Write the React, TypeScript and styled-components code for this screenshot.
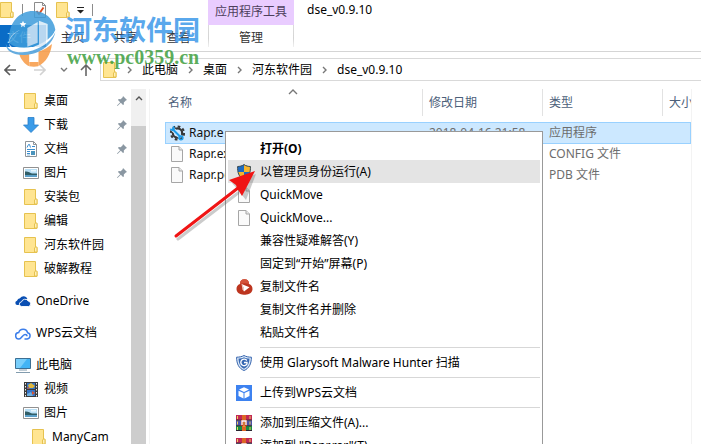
import React from 'react';
import styled, { createGlobalStyle, css } from 'styled-components';

const GlobalStyle = createGlobalStyle`
  * { box-sizing: border-box; }
  html, body { margin: 0; height: 100%; overflow: hidden; }
  body, button {
    font-family: "Noto Sans", "Noto Sans CJK SC", sans-serif;
    font-size: 12px;
    line-height: 16px;
    color: #000;
  }
  button { border: 0; padding: 0; background: none; text-align: left; }
  a { color: inherit; text-decoration: none; }
  svg { display: block; flex: none; }
`;

const Window = styled.div`
  position: relative;
  height: 100vh;
  overflow: hidden;
  display: flex;
  flex-direction: column;
  background: #fff;
`;

const TitleBar = styled.header`
  display: flex;
  height: 25px;
  flex: none;
`;

const QuickAccess = styled.div`
  display: flex;
  width: 208px;
  height: 20px;
  align-items: center;
`;

const QuickButton = styled.button<{ $gap?: number }>`
  display: flex;
  margin-left: ${(p) => p.$gap ?? 0}px;
`;

const QuickDivider = styled.span<{ $gap: number }>`
  width: 1px;
  height: 12px;
  margin-left: ${(p) => p.$gap}px;
  background: #8c8c8c;
`;

const ToolGroup = styled.div`
  width: 86px;
  padding-top: 4px;
  background: #e9ccff;
  color: #4d3f5c;
  text-align: center;
`;

const Title = styled.h1`
  margin: 2px 0 0 13px;
  font-size: 12px;
  line-height: 16px;
  font-weight: 400;
`;

const Ribbon = styled.nav`
  display: flex;
  flex: none;
  height: 27px;
  border-bottom: 1px solid #d5d5d5;
  padding-bottom: 4px;
`;

const RibbonTab = styled.button<{ $kind?: 'file' | 'tool' }>`
  width: 53px;
  padding-top: 3px;
  text-align: center;
  color: #333;
  ${(p) => p.$kind === 'file' && css`
    width: 46px;
    background: #0a6cc6;
    color: #cfe6fa;
    padding-right: 8px;
  `}
  ${(p) => p.$kind === 'tool' && css`
    width: 86px;
    margin-left: 3px;
    border: solid;
    border-width: 0 1px;
    border-image: linear-gradient(#dcdcdc, #d4d4d4 60%, #f4f4f4) 1;
  `}
`;

const AddressRow = styled.div`
  display: flex;
  flex: none;
  align-items: center;
  height: 36px;
  padding: 0 0 1px 4px;
`;

const HistoryButtons = styled.div`
  display: flex;
  align-items: center;
  width: 96px;
`;

const HistoryButton = styled.button<{ $gap?: number }>`
  margin-left: ${(p) => p.$gap ?? 0}px;
`;

const AddressBox = styled.div`
  display: flex;
  flex: 1;
  align-items: center;
  height: 23px;
  padding-left: 2px;
  border: 1px solid #d9d9d9;
  border-right: 0;
`;

const Crumb = styled.a`
  padding-left: 10px;
`;

const CrumbArrow = styled.span`
  padding-left: 10px;
`;

const Body = styled.div`
  display: flex;
  flex: 1;
  min-height: 0;
`;

const Sidebar = styled.nav`
  width: 131px;
  padding-top: 1px;
  overflow: hidden;
`;

const NavItem = styled.a<{ $level?: number; $gap?: boolean }>`
  display: flex;
  align-items: center;
  height: 24px;
  margin-top: ${(p) => (p.$gap ? 8 : 0)}px;
  padding: 0 4px 0 ${(p) => 15 + (p.$level ?? 0) * 8}px;
  white-space: nowrap;
`;

const NavIcon = styled.span`
  display: flex;
  justify-content: center;
  width: 16px;
  flex: none;
`;

const NavLabel = styled.span`
  flex: 1;
  padding-left: 5px;
`;

const ScrollTrack = styled.div`
  width: 15px;
  flex: none;
  margin-top: 1px;
  background: #f0f0f0;
`;

const ScrollUp = styled.button`
  display: flex;
  width: 15px;
  height: 37px;
  padding: 6px 0 0 4px;
`;

const ScrollThumb = styled.div`
  height: 100%;
  background: #cdcdcd;
`;

const FilePane = styled.main`
  flex: 1;
  min-width: 0;
  margin: 1px 9px 0 3px;
  padding-left: 15px;
  border: solid #f3f3f3;
  border-width: 0 1px;
  overflow: hidden;
`;

const FileTable = styled.table`
  width: 100%;
  table-layout: fixed;
  border-collapse: collapse;
`;

const HeadCell = styled.th<{ $width?: number }>`
  width: ${(p) => (p.$width ? `${p.$width}px` : 'auto')};
  height: 33px;
  padding: 0 0 6px;
  font-weight: 400;
  overflow: hidden;
  white-space: nowrap;
`;

const SortButton = styled.button<{ $first?: boolean; $last?: boolean }>`
  position: relative;
  width: 100%;
  height: 27px;
  padding-left: ${(p) => (p.$first ? 3 : 6)}px;
  border-right: ${(p) => (p.$last ? 0 : 1)}px solid #e2e2e2;
  color: #4c607a;
  overflow: hidden;
`;

const SortMark = styled.span`
  position: absolute;
  top: 0;
  left: 50%;
  margin-left: -6px;
`;

const FileCell = styled.td`
  padding: 0 0 0 6px;
  color: #6d6d6d;
  white-space: nowrap;
  overflow: hidden;
`;

const FileRow = styled.tr<{ $selected?: boolean }>`
  height: 21px;
  ${FileCell} { padding-bottom: ${(p) => (p.$selected ? 0 : 2)}px; }
  ${(p) => p.$selected && css`
    height: 22px;
    background: #cce8ff;
    box-shadow: inset 0 0 0 1px #99d1ff;
  `}
`;

const NameCell = styled(FileCell)`
  padding-left: 4px;
  color: #111;
`;

const FileName = styled.span`
  display: flex;
  align-items: center;
  gap: 4px;
`;

const FileIcon = styled.span`
  display: flex;
  justify-content: center;
  width: 16px;
`;

const Menu = styled.div`
  position: absolute;
  left: 225px;
  top: 131px;
  width: 318px;
  padding: 5px 2px;
  border: 1px solid #999;
  background: #fff;
`;

const MenuItem = styled.button<{ $active?: boolean; $bold?: boolean }>`
  display: flex;
  align-items: center;
  width: 100%;
  height: 23px;
  padding-left: 8px;
  background: ${(p) => (p.$active ? '#e4e4e4' : 'transparent')};
  font-weight: ${(p) => (p.$bold ? 700 : 400)};
  white-space: nowrap;
`;

const MenuIcon = styled.span`
  display: flex;
  justify-content: center;
  width: 16px;
  margin-right: 8px;
`;

const MenuDivider = styled.hr`
  height: 1px;
  margin: 3px 0 3px 32px;
  border: 0;
  background: #d7d7d7;
`;

const Pointer = styled.svg`
  position: absolute;
  left: 170px;
  top: 165px;
  pointer-events: none;
`;

const Watermark = styled.div`
  position: absolute;
  left: 4px;
  top: 8px;
  display: flex;
  pointer-events: none;
`;

const WatermarkText = styled.div`
  padding: 5px 0 0 1px;
  white-space: nowrap;
`;

const WatermarkName = styled.div`
  font-family: "Noto Sans CJK SC", sans-serif;
  font-weight: 700;
  font-size: 27px;
  line-height: 32px;
  color: rgba(52, 148, 232, 0.82);
`;

const WatermarkSite = styled.div`
  padding: 2px 0 0 2px;
  font-family: "Liberation Serif", serif;
  font-weight: 700;
  font-size: 20px;
  line-height: 20px;
  color: rgba(62, 158, 62, 0.85);
`;

const Folder = () => (
  <svg width="14" height="16" viewBox="0 0 14 16">
    <path d="M.5.5h11v10h1.500v5H.5z" fill="#ffe592" stroke="#e6c24f" />
    <path d="M10.500 15V11l1-1h1.500v5z" fill="#fff0b8" stroke="#e6c24f" />
  </svg>
);

const Page = () => (
  <svg width="12" height="16" viewBox="0 0 12 16">
    <path d="M.5.5h7.500l3.500 3.500v11.500H.5z" fill="#fafafa" stroke="#a6a6a6" />
    <path d="M8 .5V4h3.500" fill="#e8e8e8" stroke="#a6a6a6" />
  </svg>
);

const CheckedPage = () => (
  <svg width="12" height="16" viewBox="0 0 12 16">
    <path d="M.5.5h8l3 3v12H.5z" fill="#fdfdfd" stroke="#8b8b8b" />
    <path d="M8.500.5v3h3" fill="none" stroke="#8b8b8b" />
    <path d="M2.500 9l2.500 3 4.500-6.500" fill="none" stroke="#dc4a1c" strokeWidth="1.800" />
  </svg>
);

const Download = () => (
  <svg width="16" height="16" viewBox="0 0 16 16">
    <path d="M5 .5h6V8h4.500L8 15.500.5 8H5z" fill="#3a9be8" stroke="#2a7fc9" strokeWidth=".8" />
  </svg>
);

const Document = () => (
  <svg width="12" height="16" viewBox="0 0 12 16">
    <path d="M.5.5h8l3 3v12H.5z" fill="#fff" stroke="#8e9499" />
    <path d="M8.500.5v3h3" fill="none" stroke="#8e9499" />
    <path d="M2 6.500l1.500-3h1l1 3M7 5.500h3M2 8.500h8M2 10.500h3M2 12.500h3" fill="none" stroke="#3a8ed0" />
    <path d="M6 10h4v4H6z" fill="#4a94bd" />
    <path d="M2 14h3" stroke="#89b8d8" />
  </svg>
);

const Picture = () => (
  <svg width="16" height="12" viewBox="0 0 16 12">
    <path d="M.5.5h15v11H.5z" fill="#fff" stroke="#919191" />
    <path d="M2 2h12v8H2z" fill="#b9dff5" />
    <path d="M2 4.500c3-.5 5 1 7 2h5v1.500H2z" fill="#315e67" />
    <path d="M2 8h12v2H2z" fill="#5b9fc8" />
    <path d="M8 3h5v1.500H8z" fill="#e8f6fd" />
  </svg>
);

const OneDrive = () => (
  <svg width="16" height="11" viewBox="0 0 16 11">
    <path d="M3.800 9H2.200A2.200 2.200 0 0 1 2 4.700 3.200 3.200 0 0 1 5 2.300 4.300 4.300 0 0 1 12.400 2.500" fill="#0a4fb3" />
    <path d="M6.800 10.500a2.300 2.300 0 0 1-.3-4.600A3.700 3.700 0 0 1 13.200 5a2.800 2.800 0 0 1 .3 5.500z" fill="#0a4fb3" stroke="#fff" strokeWidth=".9" />
  </svg>
);

const WpsCloud = () => (
  <svg width="16" height="13" viewBox="0 0 16 13">
    <path d="M9.500 12h2.700a3.200 3.200 0 0 0 .4-6.300A4.600 4.600 0 0 0 3.700 5.600 3.200 3.200 0 0 0 4 12c2.500 0 3.500-4.500 6-4.500 1.200 0 2 .8 2 1.700" fill="none" stroke="#3c7eea" strokeWidth="1.500" />
  </svg>
);

const Computer = () => (
  <svg width="16" height="15" viewBox="0 0 16 15">
    <path d="M.5.5h15v10H.5z" fill="#42b4f5" stroke="#3d6f93" />
    <path d="M1 1h11L5 10H1z" fill="#78cefb" />
    <path d="M4 12h8M1 14.500h14" stroke="#829cae" />
  </svg>
);

const Video = () => (
  <svg width="14" height="15" viewBox="0 0 14 15">
    <path d="M0 0h14v15H0z" fill="#3b3b3b" />
    <path d="M1.500 1v14M12.500 1v14" stroke="#eee" strokeDasharray="1.500 1.500" />
    <path d="M3 1h8v6H3zM3 8h8v6H3z" fill="#3674c6" />
    <path d="M4 3l3-2 4 3-2 2H5z" fill="#e0b73d" />
    <path d="M3 5l3 1-2 1zM8 9l3 2-3 2z" fill="#d75335" />
    <path d="M3 12l4-2 2 4H3z" fill="#6fb0df" />
  </svg>
);

const Pin = () => (
  <svg width="10" height="10" viewBox="0 0 10 10">
    <path d="M6 0l4 4-1.200.4-2 2 .1 2L6 9 3.800 6.800.5 10 0 9.500 3.200 6.200 1 4l.7-.9 2 .1 2-2z" fill="#8a97a2" />
  </svg>
);

const Gear = () => (
  <svg width="16" height="16" viewBox="0 0 16 16">
    <circle cx="8.500" cy="8" r="6.600" fill="none" stroke="#373737" strokeWidth="2" strokeDasharray="2.700 2.480" />
    <circle cx="8.500" cy="8" r="4.700" fill="none" stroke="#373737" strokeWidth="2.200" />
    <path d="M3 3.500l9 9" stroke="#cce8ff" strokeWidth="4" />
    <path d="M3 3.500l9 9" stroke="#1c9be8" strokeWidth="2" />
    <path d="M.8 3.500a2.800 2.800 0 0 0 4.500 2A3 3 0 0 0 3.800.8L3.800 3.200 2.800 4z" fill="#1c9be8" />
    <circle cx="12" cy="12.800" r="1.900" fill="none" stroke="#1c9be8" strokeWidth="1.500" />
  </svg>
);

const AdminShield = () => (
  <svg width="14" height="16" viewBox="0 0 14 16">
    <path d="M7 .6C5 2 3 2.400.6 2.500 .4 8 1.500 13 7 15.400 12.500 13 13.600 8 13.400 2.500 11 2.400 9 2 7 .6z" fill="#1e6bc0" />
    <path d="M7 .6C9 2 11 2.400 13.400 2.500q.2 3-.4 5.500H7zM7 8v7.400C3.300 13.800 1.700 11.300 1 8z" fill="#f7b52c" />
    <path d="M7 .6C5 2 3 2.400.6 2.500 .4 8 1.500 13 7 15.400 12.500 13 13.600 8 13.400 2.500 11 2.400 9 2 7 .6z" fill="none" stroke="#3b4a50" />
  </svg>
);

const CopyTool = () => (
  <svg width="17" height="16" viewBox="0 0 17 16">
    <path d="M8.500.3c3 0 4.600 2 4.600 4.800 2.300.8 3.600 2.700 3.400 5.200-.3 3.500-3.600 5.700-8 5.400-4.400.3-7.700-1.900-8-5.400C.3 7.800 1.600 5.900 3.900 5.100 3.900 2.300 5.500.3 8.500.3z" fill="#bd351f" />
    <path d="M8.500.3c3 0 4.600 2 4.600 4.800C10 4 7 4 3.900 5.100 3.900 2.300 5.500.3 8.500.3z" fill="#d4533a" />
    <path d="M5.500 5l8 3.200-5.500 4.300v-3z" fill="#fff" />
    <path d="M5.500 5L8 8.500v4l-1.500-2z" fill="#efc9c0" />
  </svg>
);

const GlaryShield = () => (
  <svg width="16" height="16" viewBox="0 0 16 16">
    <path d="M8 .5C6 1.700 3 2.200.6 2.200.6 9 3 13.500 8 15.500c5-2 7.400-6.500 7.400-13.300C13 2.200 10 1.700 8 .5z" fill="#dce9f7" stroke="#3564ae" />
    <path d="M8 2.200C6.300 3.200 4.500 3.500 2.500 3.600 2.800 9 4.600 12.200 8 13.800c3.400-1.600 5.200-4.800 5.500-10.200C11.500 3.500 9.700 3.200 8 2.200z" fill="#3668b3" />
    <path d="M10.800 5.500A3.300 3.300 0 1 0 11 9V7.500H8" fill="none" stroke="#fff" strokeWidth="1.400" />
  </svg>
);

const WpsCube = () => (
  <svg width="16" height="16" viewBox="0 0 16 16">
    <path d="M0 0h16v16H0z" fill="#3d82f0" />
    <path d="M8 2.300l5 2.300-5 2.400-5-2.400zM2.500 5.700l5 2.400v5.400l-5-2.500zM13.500 5.700l-5 2.400v5.400l5-2.500z" fill="#fff" />
  </svg>
);

const Archive = () => (
  <svg width="16" height="16" viewBox="0 0 16 16">
    <path d="M0 0h16v5H0z" fill="#c32755" />
    <path d="M0 5.500h16v5H0z" fill="#4b50a8" />
    <path d="M0 11h16v5H0z" fill="#198b42" />
    <path d="M0 5.200h16M0 10.700h16M0 15.500h16" stroke="#2b2430" />
    <path d="M1.500 1v3M1.500 6.500v3M1.500 12v3M14 1v3M14 6.500v3M14 12v3" stroke="#e9d25a" />
    <path d="M6 0h4v16H6z" fill="#dc6725" />
    <path d="M5 5h6v6H5z" fill="#b63629" />
    <path d="M6 10V6h4v4" fill="none" stroke="#fff" strokeWidth="1.300" />
    <path d="M8 7v5" stroke="#f0be48" />
  </svg>
);

const Chevron = ({ d, w, h, color = '#777' }: { d: string; w: number; h: number; color?: string }) => (
  <svg width={w} height={h} viewBox={`0 0 ${w} ${h}`}>
    <path d={d} fill="none" stroke={color} strokeWidth="1.400" />
  </svg>
);

const HistoryArrow = ({ color, flip }: { color: string; flip?: boolean }) => (
  <svg width="12" height="12" viewBox="0 0 12 12">
    <path d={flip ? 'M0 6h11M6 1l5 5-5 5' : 'M12 6H1M6 1L1 6l5 5'} fill="none" stroke={color} strokeWidth="1.600" />
  </svg>
);

const UpArrow = () => (
  <svg width="12" height="12" viewBox="0 0 12 12">
    <path d="M6 12V1M1 6l5-5 5 5" fill="none" stroke="#666" strokeWidth="1.600" />
  </svg>
);

const SiteLogo = () => (
  <svg width="60" height="60" viewBox="12 24 180 180">
    <g opacity=".86">
      <path d="M28 104C32 62 62 33 98 33c36 0 63 22 68 56-8 24-28 38-48 46-34 12-72 12-90-6-3-8-2-16 0-25z" fill="#3f9ddb" />
      <path d="M57 160c12 3 22 3 31 1v38c-14-6-26-20-31-39zM115 155c16-5 30-13 41-23-4 30-18 56-41 66z" fill="#f79a45" />
      <path d="M88 186h27v13c-9 2-18 2-27 0z" fill="#f79a45" />
      <path d="M82 84l31-18v62l-31 12zM117 62l26 10v50l-26 18zM88 150h27v36H88z" fill="#fff" opacity=".78" />
      <path d="M60 90c-36 14-46 50-10 56 40 6 100-20 117-56-10 44-62 72-106 70-38-2-50-46-1-70z" fill="#fff" />
      <path d="M17 130c6 22 28 28 50 27 42-2 84-26 99-60-8 38-46 66-92 68-34 1-56-10-57-35z" fill="#4ca0dc" />
      <path d="M69 62l3 7 7 1-5 5 1 7-6-4-6 4 1-7-5-5 7-1z" fill="#fff" />
    </g>
  </svg>
);

type NavEntry = { label: string; icon: React.ReactNode; level?: number; gap?: boolean; pinned?: boolean };

const navEntries: NavEntry[] = [
  { label: '桌面', icon: <Folder />, level: 1, pinned: true },
  { label: '下载', icon: <Download />, level: 1, pinned: true },
  { label: '文档', icon: <Document />, level: 1, pinned: true },
  { label: '图片', icon: <Picture />, level: 1, pinned: true },
  { label: '安装包', icon: <Folder />, level: 1 },
  { label: '编辑', icon: <Folder />, level: 1 },
  { label: '河东软件园', icon: <Folder />, level: 1 },
  { label: '破解教程', icon: <Folder />, level: 1 },
  { label: 'OneDrive', icon: <OneDrive />, gap: true },
  { label: 'WPS云文档', icon: <WpsCloud />, gap: true },
  { label: '此电脑', icon: <Computer />, gap: true },
  { label: '视频', icon: <Video />, level: 1 },
  { label: '图片', icon: <Picture />, level: 1 },
  { label: 'ManyCam', icon: <Folder />, level: 2 },
];

const files = [
  { name: 'Rapr.e', date: '2018-04-16 21:58', type: '应用程序', icon: <Gear />, selected: true },
  { name: 'Rapr.exe.config', date: '', type: 'CONFIG 文件', icon: <Page /> },
  { name: 'Rapr.pdb', date: '', type: 'PDB 文件', icon: <Page /> },
];

type MenuEntry = { label: string; icon?: React.ReactNode; active?: boolean; bold?: boolean };

const menuGroups: MenuEntry[][] = [
  [
    { label: '打开(O)', bold: true },
    { label: '以管理员身份运行(A)', icon: <AdminShield />, active: true },
    { label: 'QuickMove', icon: <Page /> },
    { label: 'QuickMove...', icon: <Page /> },
    { label: '兼容性疑难解答(Y)' },
    { label: '固定到“开始”屏幕(P)' },
    { label: '复制文件名', icon: <CopyTool /> },
    { label: '复制文件名并删除' },
    { label: '粘贴文件名' },
  ],
  [{ label: '使用 Glarysoft Malware Hunter 扫描', icon: <GlaryShield /> }],
  [{ label: '上传到WPS云文档', icon: <WpsCube /> }],
  [
    { label: '添加到压缩文件(A)...', icon: <Archive /> },
    { label: '添加到 "Rapr.rar"(T)', icon: <Archive /> },
  ],
];

const crumbs = ['此电脑', '桌面', '河东软件园', 'dse_v0.9.10'];

export default function App() {
  return (
    <Window>
      <GlobalStyle />
      <TitleBar>
        <QuickAccess>
          <QuickButton aria-label="文件夹"><Folder /></QuickButton>
          <QuickDivider $gap={8} />
          <QuickButton aria-label="属性" $gap={11}><CheckedPage /></QuickButton>
          <QuickButton aria-label="新建文件夹" $gap={10}><Folder /></QuickButton>
          <QuickButton aria-label="自定义快速访问工具栏" $gap={7}>
            <svg width="7" height="7" viewBox="0 0 7 7"><path d="M0 0h7v1H0zM0 3h7L3.500 6.500z" fill="#222" /></svg>
          </QuickButton>
          <QuickDivider $gap={8} />
        </QuickAccess>
        <ToolGroup>应用程序工具</ToolGroup>
        <Title>dse_v0.9.10</Title>
      </TitleBar>

      <Ribbon>
        <RibbonTab $kind="file">文件</RibbonTab>
        <RibbonTab>主页</RibbonTab>
        <RibbonTab>共享</RibbonTab>
        <RibbonTab>查看</RibbonTab>
        <RibbonTab $kind="tool">管理</RibbonTab>
      </Ribbon>

      <AddressRow>
        <HistoryButtons>
          <HistoryButton aria-label="后退"><HistoryArrow color="#5c5c5c" /></HistoryButton>
          <HistoryButton aria-label="前进" $gap={18}><HistoryArrow color="#d2d2d2" flip /></HistoryButton>
          <HistoryButton aria-label="最近浏览的位置" $gap={14}><Chevron d="M1 1l3 3 3-3" w={8} h={6} /></HistoryButton>
          <HistoryButton aria-label="上移" $gap={12}><UpArrow /></HistoryButton>
        </HistoryButtons>
        <AddressBox>
          <Folder />
          {crumbs.map((name) => (
            <React.Fragment key={name}>
              <CrumbArrow><Chevron d="M1 1l3 3-3 3" w={5} h={8} /></CrumbArrow>
              <Crumb href="#">{name}</Crumb>
            </React.Fragment>
          ))}
        </AddressBox>
      </AddressRow>

      <Body>
        <Sidebar>
          {navEntries.map((item, i) => (
            <NavItem key={i} href="#" $level={item.level} $gap={item.gap}>
              <NavIcon>{item.icon}</NavIcon>
              <NavLabel>{item.label}</NavLabel>
              {item.pinned && <Pin />}
            </NavItem>
          ))}
        </Sidebar>
        <ScrollTrack>
          <ScrollUp aria-label="向上滚动"><Chevron d="M1 5l3-3 3 3" w={8} h={7} color="#555" /></ScrollUp>
          <ScrollThumb />
        </ScrollTrack>
        <FilePane>
          <FileTable>
            <thead>
              <tr>
                <HeadCell $width={258}>
                  <SortButton $first>
                    名称
                    <SortMark><Chevron d="M1 5l4-4 4 4" w={10} h={6} /></SortMark>
                  </SortButton>
                </HeadCell>
                <HeadCell $width={120}><SortButton>修改日期</SortButton></HeadCell>
                <HeadCell $width={120}><SortButton>类型</SortButton></HeadCell>
                <HeadCell><SortButton $last>大小</SortButton></HeadCell>
              </tr>
            </thead>
            <tbody>
              {files.map((file) => (
                <FileRow key={file.name} $selected={file.selected}>
                  <NameCell><FileName><FileIcon>{file.icon}</FileIcon>{file.name}</FileName></NameCell>
                  <FileCell>{file.date}</FileCell>
                  <FileCell>{file.type}</FileCell>
                  <FileCell />
                </FileRow>
              ))}
            </tbody>
          </FileTable>
        </FilePane>
      </Body>

      <Menu role="menu">
        {menuGroups.map((group, g) => (
          <React.Fragment key={g}>
            {g > 0 && <MenuDivider />}
            {group.map((item) => (
              <MenuItem key={item.label} role="menuitem" $active={item.active} $bold={item.bold}>
                <MenuIcon>{item.icon}</MenuIcon>
                {item.label}
              </MenuItem>
            ))}
          </React.Fragment>
        ))}
      </Menu>

      <Pointer width="92" height="80" viewBox="0 0 92 80">
        <g opacity=".3" transform="translate(2 3)">
          <path d="M6 71L66 25" stroke="#555" strokeWidth="3" strokeLinecap="round" />
          <path d="M84 6L60 15l6 7 8 10z" fill="#555" />
        </g>
        <path d="M6 71L68 23" stroke="#f01414" strokeWidth="3" strokeLinecap="round" />
        <path d="M85 6L59 15l7 5 1 3 5 8z" fill="#f01414" />
      </Pointer>

      <Watermark>
        <SiteLogo />
        <WatermarkText>
          <WatermarkName>河东软件园</WatermarkName>
          <WatermarkSite>www.pc0359.cn</WatermarkSite>
        </WatermarkText>
      </Watermark>
    </Window>
  );
}
